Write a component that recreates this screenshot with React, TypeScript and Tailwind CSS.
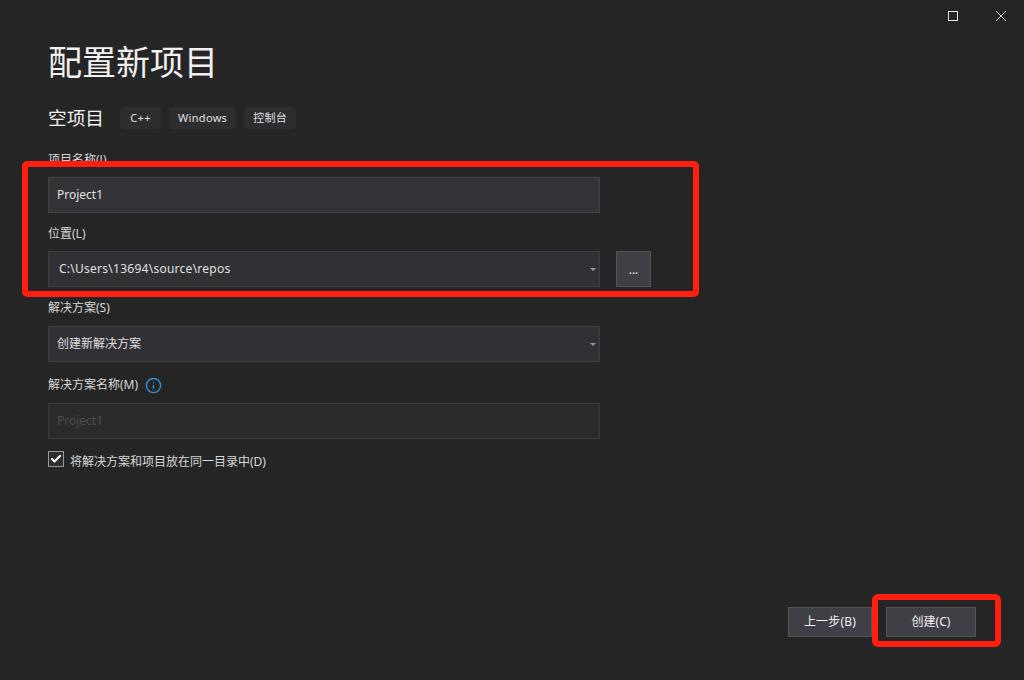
import { Check, Info } from "lucide-react";
import type { ReactNode } from "react";

function Tag({ label }: { label: string }) {
  return <span className="flex h-[22px] min-w-[41px] items-center justify-center rounded bg-[#2d2d30] px-[9px] text-[11px] tracking-[0.3px] text-[#e0e0e0]">{label}</span>;
}

function Label({ children }: { children: ReactNode }) {
  return <div className="h-[18px] text-xs leading-[18px] text-[#d8d8d8]">{children}</div>;
}

function Caret() {
  return <span className="absolute right-[3px] top-[16px] h-0 w-0 border-x-[3px] border-t-[3px] border-x-transparent border-t-[#999999]" />;
}

export default function App() {
  return (
    <div className="relative flex h-[680px] w-[1024px] flex-col overflow-hidden bg-[#252526] font-['Noto_Sans','Noto_Sans_CJK_SC',sans-serif] text-xs">
      {/* title bar */}
      <div className="flex h-[32px] shrink-0 items-start justify-end pr-[18px] pt-[11px]">
        <span className="h-[10px] w-[10px] border border-[#e6e6e6]" />
        <svg className="ml-[38px]" width="10" height="10" viewBox="0 0 10 10" fill="none" stroke="#c8c8c8" strokeWidth="1">
          <path d="M0 0L10 10M10 0L0 10" />
        </svg>
      </div>

      <div className="flex flex-1 flex-col pl-12">
        <h1 className="h-[60px] pt-[6px] text-[34px] leading-[48px] text-[#f1f1f1]">配置新项目</h1>

        <div className="mt-[15px] flex h-[22px] items-center">
          <span className="mr-4 text-[18.7px] text-[#f1f1f1]">空项目</span>
          <div className="flex gap-2">
            <Tag label="C++" />
            <Tag label="Windows" />
            <Tag label="控制台" />
          </div>
        </div>

        <div className="mt-[22px]">
          <Label>项目名称(J)</Label>
        </div>
        <div className="mt-2 flex h-9 w-[552px] items-center border border-[#434346] bg-[#333337] pl-2 text-[#e0e0e0]">Project1</div>

        <div className="mt-3">
          <Label>位置(L)</Label>
        </div>
        <div className="mt-2 flex gap-4">
          <div className="relative flex h-9 w-[552px] items-center border border-[#3f3f42] bg-[#313135] pl-[10px] tracking-[0.26px] text-[#e0e0e0]">
            C:\Users\13694\source\repos
            <Caret />
          </div>
          <button className="flex h-9 w-[35px] items-center justify-center border border-[#555555] bg-[#3f3f46] pt-[2px] text-[#f1f1f1]">...</button>
        </div>

        <div className="mt-3">
          <Label>解决方案(S)</Label>
        </div>
        <div className="relative mt-[9px] flex h-9 w-[552px] items-center border border-[#3f3f42] bg-[#313135] pl-2 text-[#e0e0e0]">
          创建新解决方案
          <Caret />
        </div>

        <div className="mt-[14px] flex h-[18px] items-center">
          <span className="leading-[18px] text-[#d8d8d8]">解决方案名称(M)</span>
          <Info className="ml-[7px]" size={17} color="#2f8fd8" strokeWidth={2} />
        </div>
        <div className="mt-[9px] flex h-9 w-[552px] items-center border border-[#3a3a3d] bg-[#2b2b2d] pl-2 text-[#4d4d50]">Project1</div>

        <div className="mt-3 flex items-start">
          <span className="flex h-4 w-4 items-center justify-center border border-[#999999] bg-[#2d2d30]">
            <Check size={12} color="#f1f1f1" strokeWidth={4.5} />
          </span>
          <span className="ml-[6px] mt-[2px] leading-[18px] text-[#d8d8d8]">将解决方案和项目放在同一目录中(D)</span>
        </div>
      </div>

      {/* footer buttons */}
      <div className="flex justify-end gap-[14px] pb-[43px] pr-12">
        <button className="h-[30px] w-[84px] border border-[#555555] bg-[#3f3f46] tracking-[0.2px] text-[#f1f1f1]">上一步(B)</button>
        <button className="h-[30px] w-[90px] border border-[#555555] bg-[#3f3f46] text-[#f1f1f1]">创建(C)</button>
      </div>

      {/* red annotation boxes */}
      <div className="pointer-events-none absolute left-[22px] top-[161px] h-[136px] w-[677px] rounded-[5px] border-[6px] border-[#ff1e10]" />
      <div className="pointer-events-none absolute left-[872px] top-[594px] h-[53px] w-[129px] rounded-[6px] border-[6px] border-[#ff1e10]" />
    </div>
  );
}
